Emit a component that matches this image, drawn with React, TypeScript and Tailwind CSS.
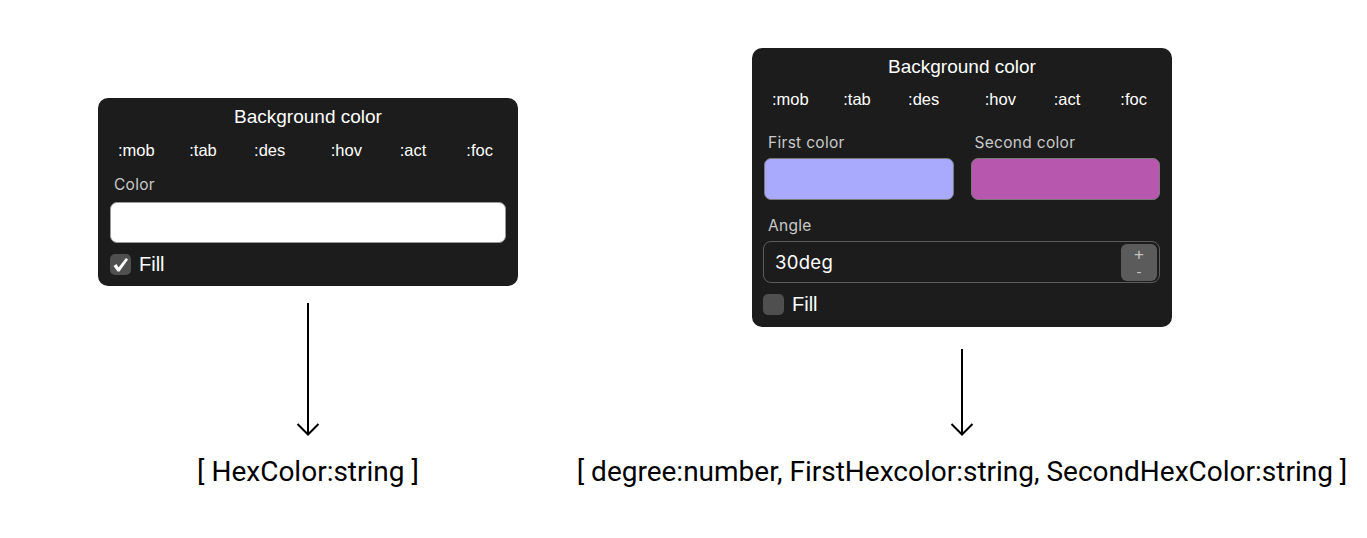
const tabs = [":mob", ":tab", ":des", ":hov", ":act", ":foc"];

function Tabs() {
  return (
    <div className="grid grid-cols-2 text-[16.5px] text-white leading-[20px] font-['Liberation_Sans',sans-serif]">
      {[tabs.slice(0, 3), tabs.slice(3)].map((group, i) => (
        <div key={i} className="grid grid-cols-3 px-[5px] text-center">
          {group.map((t) => (
            <span key={t}>{t}</span>
          ))}
        </div>
      ))}
    </div>
  );
}

function Title() {
  return (
    <div className="text-center text-[19px] leading-[22px] text-white font-['Liberation_Sans',sans-serif]">
      Background color
    </div>
  );
}

function Label({ text }: { text: string }) {
  return (
    <div className="px-[4px] text-[15.5px] leading-[18px] text-[#c9c9c9] font-['Inter',sans-serif] tracking-[0.3px]">
      {text}
    </div>
  );
}

function Arrow({ height }: { height: number }) {
  return (
    <svg width="24" height={height} viewBox={`0 0 24 ${height}`} className="block">
      <line x1="12" y1="0" x2="12" y2={height - 1} stroke="#000" strokeWidth="2" />
      <polyline
        points={`1.5,${height - 12} 12,${height - 1.5} 22.5,${height - 12}`}
        fill="none"
        stroke="#000"
        strokeWidth="2"
      />
    </svg>
  );
}

function Checkbox({ checked }: { checked: boolean }) {
  return (
    <div className="w-[21px] h-[21px] rounded-[5px] bg-[#4f4f4f] flex items-center justify-center">
      {checked && (
        <svg width="17" height="17" viewBox="0 0 17 17">
          <path d="M1.5 10 L4.5 8 L6.5 11.5 L14 2 L16 3.5 L7.5 15.5 L5.5 15.5 Z" fill="#fff" />
        </svg>
      )}
    </div>
  );
}

function FillRow({ checked }: { checked: boolean }) {
  return (
    <div className="flex items-center gap-[8px]">
      <Checkbox checked={checked} />
      <span className="text-[20px] leading-[22px] text-white font-['Liberation_Sans',sans-serif]">Fill</span>
    </div>
  );
}

function SolidPanel() {
  return (
    <div className="w-[420px] h-[188px] rounded-[10px] bg-[#1c1c1c] px-[12px] pt-[8px]">
      <Title />
      <div className="mt-[12px] -mx-[12px]">
        <Tabs />
      </div>
      <div className="mt-[16px]">
        <Label text="Color" />
      </div>
      <div className="mt-[8px] h-[41px] rounded-[7px] bg-white border border-[#9a9a9a]" />
      <div className="mt-[10px]">
        <FillRow checked />
      </div>
    </div>
  );
}

function GradientPanel() {
  return (
    <div className="w-[420px] h-[279px] rounded-[10px] bg-[#1c1c1c] px-[12px] pt-[8px]">
      <Title />
      <div className="mt-[11px] -mx-[12px]">
        <Tabs />
      </div>
      <div className="mt-[25px] grid grid-cols-2 gap-[17px]">
        <div>
          <Label text="First color" />
          <div className="mt-[6px] h-[42px] rounded-[7px] bg-[#a9a9fd] border border-[#7a7a7a]" />
        </div>
        <div>
          <Label text="Second color" />
          <div className="mt-[6px] h-[42px] rounded-[7px] bg-[#b757ae] border border-[#7a7a7a]" />
        </div>
      </div>
      <div className="mt-[17px]">
        <Label text="Angle" />
      </div>
      <div className="mt-[6px] -ml-px h-[42px] rounded-[8px] border border-[#5c5c5c] flex items-center pl-[11px] pr-[2px]">
        <span className="flex-1 pt-[2px] text-[18.5px] text-white font-['Inter',sans-serif] tracking-[0.3px]">30deg</span>
        <div className="w-[36px] h-[37px] rounded-[6px] bg-[#5b5b5b] flex flex-col items-center justify-center gap-[5px] text-[#c4c4c4] font-['Liberation_Sans',sans-serif]">
          <span className="text-[17px] leading-[13px]">+</span>
          <span className="text-[15px] leading-[11px]">-</span>
        </div>
      </div>
      <div className="mt-[10px] -ml-px">
        <FillRow checked={false} />
      </div>
    </div>
  );
}

export default function App() {
  return (
    <div className="w-[1367px] h-[538px] bg-white flex items-start pl-[98px] gap-[58px] font-['Roboto',sans-serif]">
      <div className="w-[420px] pt-[98px] flex flex-col items-center">
        <SolidPanel />
        <div className="mt-[17px]">
          <Arrow height={133} />
        </div>
        <div className="mt-[20px] text-[28px] leading-[32px] text-black whitespace-nowrap">
          [ HexColor:string ]
        </div>
      </div>
      <div className="w-[772px] pt-[48px] flex flex-col items-center">
        <GradientPanel />
        <div className="mt-[22px]">
          <Arrow height={87} />
        </div>
        <div className="mt-[20px] text-[28px] leading-[32px] text-black whitespace-nowrap">
          [ degree:number, FirstHexcolor:string, SecondHexColor:string ]
        </div>
      </div>
    </div>
  );
}
